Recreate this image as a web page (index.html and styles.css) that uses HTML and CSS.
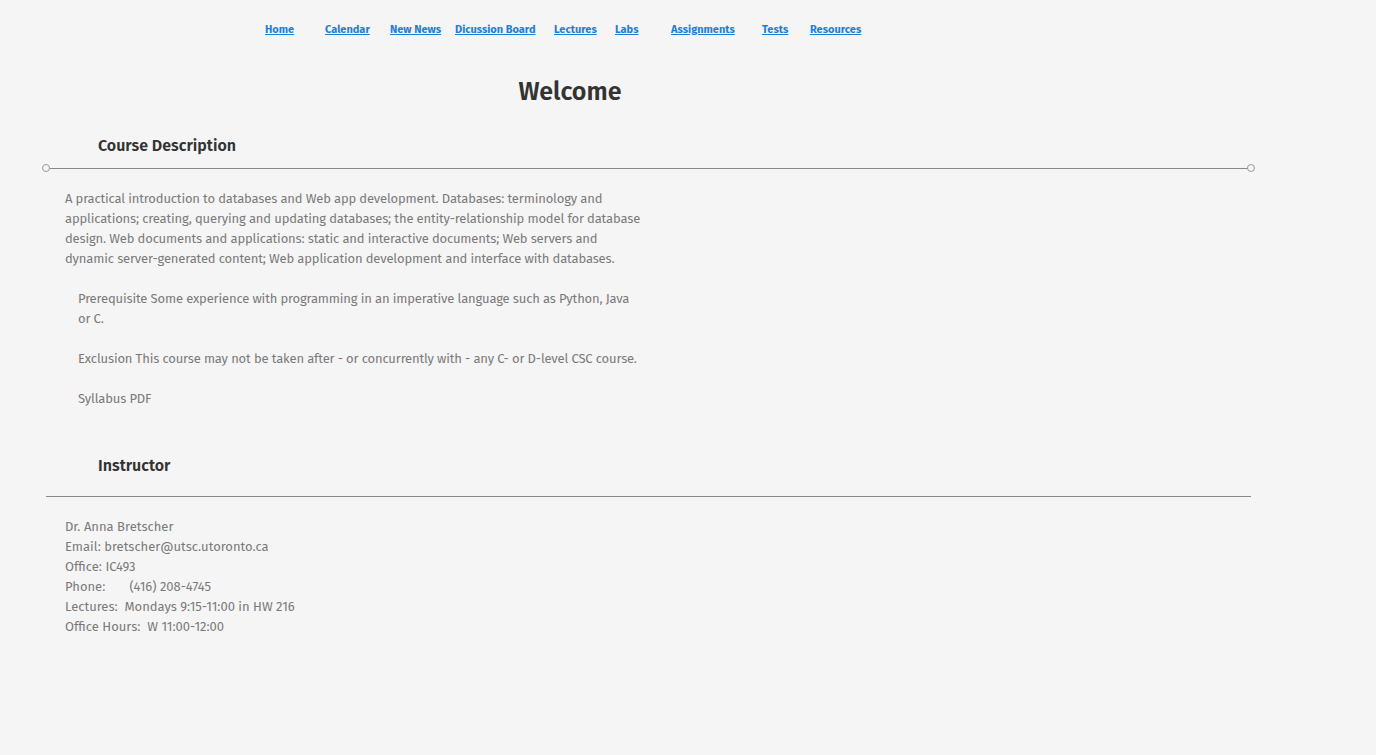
FILE: index.html
```html
<!DOCTYPE html>
<html>
<head>
<meta charset="utf-8">
<title>Welcome</title>
<link rel="stylesheet" href="styles.css">
</head>
<body>
<nav class="nav">
  <a href="#">Home</a>
  <a href="#">Calendar</a>
  <a href="#">New News</a>
  <a href="#">Dicussion Board</a>
  <a href="#">Lectures</a>
  <a href="#">Labs</a>
  <a href="#">Assignments</a>
  <a href="#">Tests</a>
  <a href="#">Resources</a>
</nav>
<h1 class="title">Welcome</h1>
<section class="section">
  <h2 class="heading">Course Description</h2>
  <div class="rule dotted"></div>
  <div class="body">
    <p class="lead">A practical introduction to databases and Web app development. Databases: terminology and applications; creating, querying and updating databases; the entity-relationship model for database design. Web documents and applications: static and interactive documents; Web servers and dynamic server-generated content; Web application development and interface with databases.</p>
    <p class="indent">Prerequisite Some experience with programming in an imperative language such as Python, Java or C.</p>
    <p class="indent">Exclusion This course may not be taken after - or concurrently with - any C- or D-level CSC course.</p>
    <p class="indent">Syllabus PDF</p>
  </div>
</section>
<section class="section instructor">
  <h2 class="heading">Instructor</h2>
  <div class="rule"></div>
  <div class="info">
    <div>Dr. Anna Bretscher</div>
    <div>Email: bretscher@utsc.utoronto.ca</div>
    <div>Office: IC493</div>
    <div>Phone:&nbsp;&nbsp;&nbsp;&nbsp;&nbsp;&nbsp; (416) 208-4745</div>
    <div>Lectures:&nbsp; Mondays 9:15-11:00 in HW 216</div>
    <div>Office Hours:&nbsp; W 11:00-12:00</div>
  </div>
</section>
</body>
</html>
```

FILE: styles.css
```css
html, body {
  margin: 0;
  padding: 0;
  background: #f5f5f5;
}
body {
  font-family: "Fira Sans", Lato, "Open Sans", sans-serif;
  color: #7a7a7a;
  min-height: 755px;
}
.nav {
  display: grid;
  grid-template-columns: 60px 65px 65px 99px 61px 56px 91px 48px auto;
  padding: 22px 0 0 265px;
  height: 20px;
}
.nav a {
  color: #1f7ed6;
  font-weight: 700;
  font-size: 11px;
  text-decoration: underline;
  line-height: 16px;
}
.title {
  margin: 35px 0 0 0;
  width: 1140px;
  text-align: center;
  font-size: 25px;
  font-weight: 600;
  color: #333;
  line-height: 30px;
}
.heading {
  margin: 0 0 0 98px;
  font-size: 16px;
  font-weight: 600;
  color: #333;
  line-height: 20px;
}
.section {
  margin-top: 29px;
}
.rule {
  margin: 12px 0 0 46px;
  width: 1205px;
  height: 1px;
  background: #888;
  position: relative;
}
.rule.dotted::before,
.rule.dotted::after {
  content: "";
  position: absolute;
  top: -4px;
  width: 6px;
  height: 6px;
  border: 1px solid #999;
  border-radius: 50%;
  background: #f5f5f5;
}
.rule.dotted::before { left: -4px; }
.rule.dotted::after { right: -4px; }
.body {
  padding: 20px 0 0 65px;
  width: 580px;
  font-size: 13px;
  letter-spacing: -0.15px;
  line-height: 20px;
}
.body p {
  margin: 0 0 20px 0;
}
.body .indent {
  margin-left: 13px;
  margin-right: 8px;
}
.instructor {
  margin-top: 47px;
}
.instructor .rule {
  margin-top: 20px;
}
.info {
  padding: 20px 0 0 65px;
  font-size: 13px;
  line-height: 20px;
}
```
